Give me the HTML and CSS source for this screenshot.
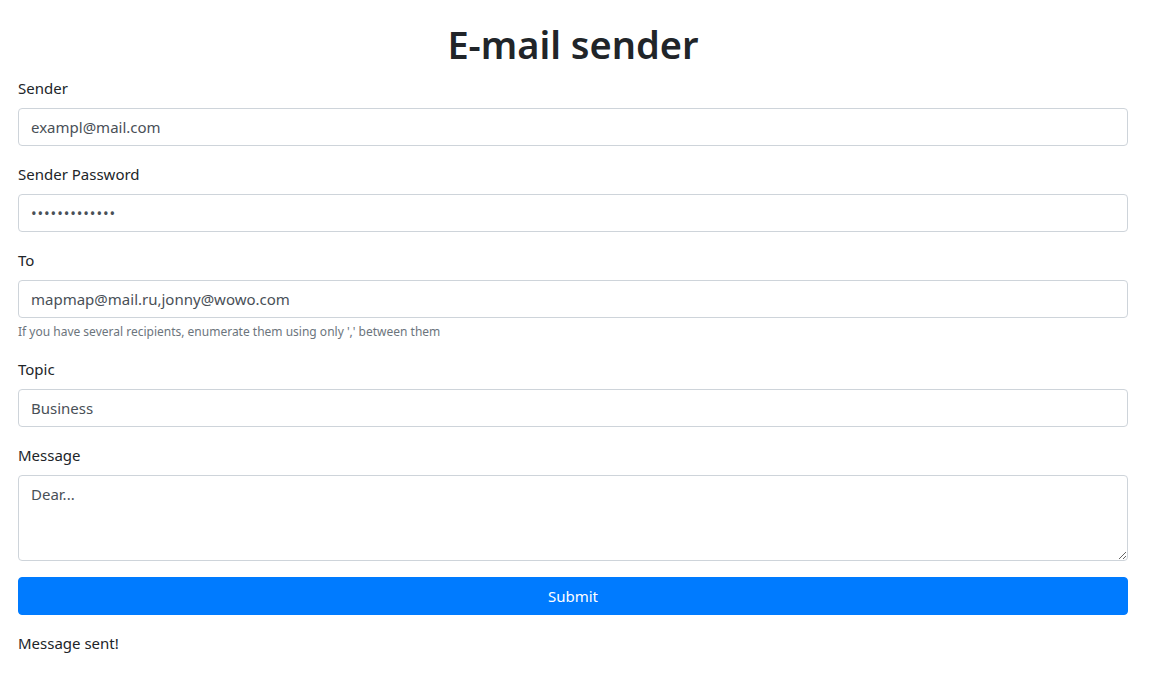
FILE: index.html
```html
<!DOCTYPE html>
<html lang="en">
<head>
<meta charset="utf-8">
<title>E-mail sender</title>
<link rel="stylesheet" href="styles.css">
</head>
<body>
<div class="container">
  <h1 class="title">E-mail sender</h1>
  <form class="form">
    <div class="form-group">
      <label class="label" for="sender">Sender</label>
      <input class="control" id="sender" type="text" value="exampl@mail.com">
    </div>
    <div class="form-group">
      <label class="label" for="pass">Sender Password</label>
      <input class="control password" id="pass" type="password" value="abcdefghijklm">
    </div>
    <div class="form-group">
      <label class="label" for="to">To</label>
      <input class="control" id="to" type="text" value="mapmap@mail.ru,jonny@wowo.com">
      <small class="hint">If you have several recipients, enumerate them using only ',' between them</small>
    </div>
    <div class="form-group">
      <label class="label" for="topic">Topic</label>
      <input class="control" id="topic" type="text" value="Business">
    </div>
    <div class="form-group">
      <label class="label" for="msg">Message</label>
      <textarea class="control area" id="msg" rows="3">Dear...</textarea>
    </div>
    <button class="btn" type="button">Submit</button>
  </form>
  <p class="status">Message sent!</p>
</div>
</body>
</html>
```

FILE: styles.css
```css
* { box-sizing: border-box; }
html, body { margin: 0; padding: 0; background: #fff; }
body {
  font-family: "Noto Sans", "Open Sans", "Liberation Sans", sans-serif;
  font-size: 16px;
  line-height: 1.5;
  color: #212529;
}
.container {
  padding: 20px 24px 0 18px;
}
.title {
  margin: 0 0 8px;
  font-size: 38px;
  font-weight: 600;
  line-height: 48px;
  text-align: center;
  color: #212529;
}
.form { margin: 0; }
.form-group {
  display: flex;
  flex-direction: column;
  margin-bottom: 16px;
}
.label {
  display: block;
  font-size: 15px;
  line-height: 24px;
  margin-bottom: 8px;
}
.control {
  display: block;
  width: 100%;
  height: 38px;
  padding: 6px 12px;
  font-family: inherit;
  font-size: 15px;
  line-height: 24px;
  color: #495057;
  background: #fff;
  border: 1px solid #ced4da;
  border-radius: 4px;
  outline: none;
}
.password {
  letter-spacing: 0.9px;
}
.area {
  height: 86px;
  resize: vertical;
}
.hint {
  display: block;
  margin-top: 4px;
  font-size: 12px;
  line-height: 19px;
  color: #6c757d;
}
.btn {
  display: block;
  width: 100%;
  height: 38px;
  padding: 6px 12px;
  font-family: inherit;
  font-size: 15px;
  line-height: 24px;
  color: #fff;
  background: #007bff;
  border: 1px solid #007bff;
  border-radius: 4px;
  cursor: pointer;
}
.status {
  margin: 16px 0 0;
  font-size: 15px;
  line-height: 24px;
}
```
